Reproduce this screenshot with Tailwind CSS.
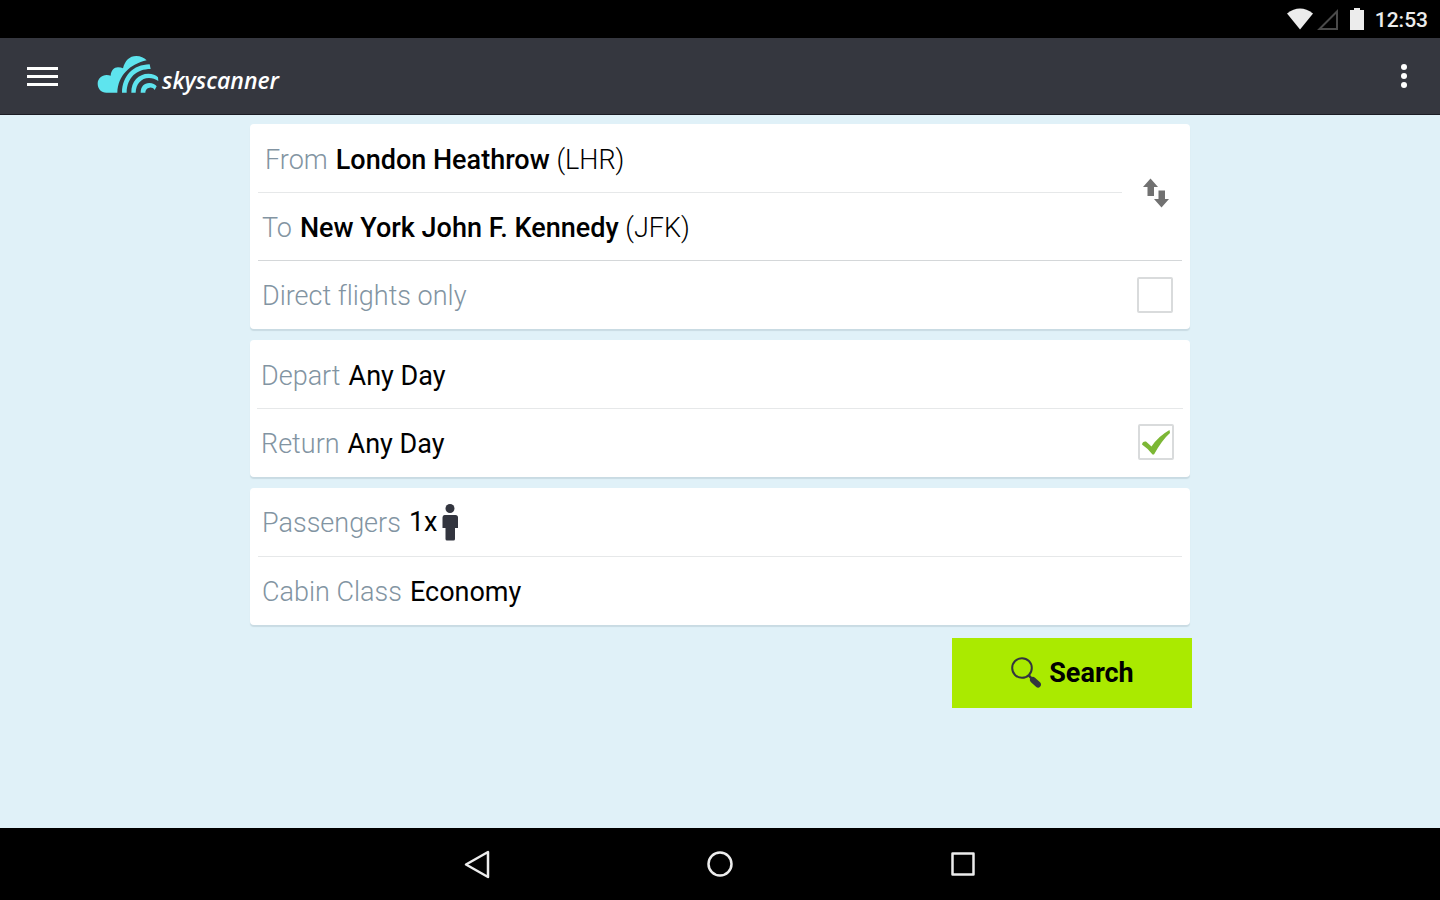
<!DOCTYPE html>
<html lang="en">
<head>
<meta charset="utf-8">
<meta name="viewport" content="width=device-width, initial-scale=1">
<title>Skyscanner</title>
<script src="https://cdn.jsdelivr.net/npm/@tailwindcss/browser@4"></script>
</head>
<body class="flex min-h-screen flex-col bg-[#e0f1f8] font-['Roboto',sans-serif] text-[27px] leading-8 text-black [font-variant-ligatures:none]">

<!-- System status bar -->
<div class="flex h-[38px] items-center justify-end bg-black pr-3 text-[#ececec]">
  <svg class="mr-1 h-[22px] w-[26px]" viewBox="0 0 26 22" fill="#ececec" aria-hidden="true"><path d="M0 5.500Q13-4.500 26 5.500L13 21.500Z"/></svg>
  <svg class="mr-3 h-[21px] w-[21px]" viewBox="0 0 21 21" fill="none" stroke="#4a4a4a" stroke-width="2" aria-hidden="true"><path d="M2.500 20H20V2.500Z"/></svg>
  <svg class="mr-[11px] h-[22px] w-[14px]" viewBox="0 0 14 22" fill="#ececec" aria-hidden="true"><path d="M4 0h6v2h4v20H0V2h4z"/></svg>
  <time class="pt-0.5 text-[21px] leading-6 font-medium">12:53</time>
</div>

<!-- App bar -->
<header class="flex h-[77px] items-center border-b border-[#1c1c24] bg-[#35373f] px-[27px]">
  <button type="button" aria-label="Menu" class="mr-[39px] flex w-[31px] flex-col gap-[5px]">
    <span class="h-[3px] bg-white"></span><span class="h-[3px] bg-white"></span><span class="h-[3px] bg-white"></span>
  </button>
  <a href="#" class="flex items-center" aria-label="skyscanner">
    <svg class="mb-1 h-10 w-[62px]" viewBox="289 54 186 120" fill="#5ee4ee" aria-hidden="true">
      <path d="M350 170H317C302 170 291 158 291 143C291 128 303 117 318 117C323 117 327 118 330 119C331 104 340 94 352 94C358 94 363 95 367 97C373 74 386 60 407 60C420 60 430 65 438 73C388 84 352 119 350 170Z"/>
      <path d="M364 170C365 120 397 86 447 85L450 99C408 99 379 124 378 170Z"/>
      <path d="M392 170C391 136 414 113 443 113C456 113 466 117 472 124L473 135C464 129 455 126 445 126C421 126 406 145 405 170Z"/>
      <path d="M420 170C420 152 430 141 446 141C456 141 464 145 468 151L462 162C458 156 452 154 447 155C438 156 434 162 434 170Z"/>
    </svg>
    <span class="ml-[3px] pt-2 font-['Open_Sans',sans-serif] text-[23px] leading-8 font-semibold text-white italic">skyscanner</span>
  </a>
  <button type="button" aria-label="More options" class="ml-auto flex w-[18px] flex-col items-center gap-[3px]">
    <span class="size-[6px] rounded-full bg-white"></span><span class="size-[6px] rounded-full bg-white"></span><span class="size-[6px] rounded-full bg-white"></span>
  </button>
</header>

<main class="w-full flex-1 px-2 pt-[9px]">
  <form class="mx-auto flex w-full max-w-[940px] flex-col gap-[11px]">

    <!-- Route -->
    <section class="rounded-[4px] bg-white px-2 shadow-[0_2px_1px_#c9dbe3]">
      <div class="flex border-b border-[#d4d7d9]">
        <div class="flex-1">
          <button type="button" class="flex h-[69px] w-full items-center gap-2 border-b border-[#e6e8e9] px-[7px] pt-1"><span class="font-light text-[#8294a2]">From</span><span><span class="font-medium">London Heathrow</span> <span class="font-light">(LHR)</span></span></button>
          <button type="button" class="flex h-[67px] w-full items-center gap-2 px-1 pt-0.5"><span class="font-light text-[#8294a2]">To</span><span><span class="font-medium">New York John F. Kennedy</span> <span class="font-light">(JFK)</span></span></button>
        </div>
        <button type="button" aria-label="Swap origin and destination" class="flex w-[60px] items-center justify-center pt-0.5 pl-2">
          <svg class="h-[30px] w-[28px]" viewBox="0 0 28 30" fill="#717171" aria-hidden="true"><path d="M8.500 0.500L16 9H12V18H5.500V9H1Z"/><path d="M16.500 12.500H23V21H27L19.500 29.500L12 21H16.500Z"/></svg>
        </button>
      </div>
      <label class="flex h-[68px] items-center justify-between pr-[9px] pl-1">
        <span class="pt-0.5 font-light text-[#8294a2]">Direct flights only</span>
        <input type="checkbox" class="size-9 appearance-none rounded-[2px] border-2 border-[#d9dbdc] bg-white">
      </label>
    </section>

    <!-- Dates -->
    <section class="rounded-[4px] bg-white px-[7px] shadow-[0_2px_1px_#c9dbe3]">
      <button type="button" class="flex h-[69px] w-full items-center gap-2 border-b border-[#e6e8e9] px-1 pt-1"><span class="font-light text-[#8294a2]">Depart</span><span>Any Day</span></button>
      <div class="flex h-[68px] items-center pr-[9px] pb-0.5 pl-1">
        <button type="button" class="flex flex-1 items-center gap-2 pt-1"><span class="font-light text-[#8294a2]">Return</span><span>Any Day</span></button>
        <span class="relative size-9">
          <input type="checkbox" checked aria-label="Return flight" class="peer block size-9 appearance-none rounded-[2px] border-2 border-[#d9dbdc] bg-white">
          <svg class="pointer-events-none absolute inset-0 hidden size-9 peer-checked:block" viewBox="0 0 36 36" fill="#7cb735" aria-hidden="true"><path d="M4 20.500Q4.500 17 8 17.500L13.500 22.500Q20 12.500 31.500 6L32 9Q24 16 16 30.500H14.500Q10 24.500 4 20.500Z"/></svg>
        </span>
      </div>
    </section>

    <!-- Travellers -->
    <section class="rounded-[4px] bg-white px-2 shadow-[0_2px_1px_#c9dbe3]">
      <button type="button" class="flex h-[69px] w-full items-center gap-2 border-b border-[#e6e8e9] px-1">
        <span class="pt-0.5 font-light text-[#8294a2]">Passengers</span>
        <span class="flex items-center gap-[5px]">1x
          <svg class="h-[37px] w-4" viewBox="0 0 16 37" fill="#33353f" aria-hidden="true"><circle cx="8" cy="4.500" r="4.500"/><path d="M2.500 11H13.500Q16 11 16 13.500V24H13V35Q13 36.500 11.500 36.500H5Q3.500 36.500 3.500 35V24H0.500V13.500Q0.500 11 2.500 11Z"/></svg>
        </span>
      </button>
      <button type="button" class="flex h-[68px] w-full items-center gap-2 px-1 pt-0.5"><span class="font-light text-[#8294a2]">Cabin Class</span><span>Economy</span></button>
    </section>

    <button type="submit" class="-mr-0.5 mt-[2px] flex h-[70px] w-[240px] items-center justify-center gap-2 self-end bg-[#aaea00] font-bold">
      <svg class="h-8 w-[31px]" viewBox="0 0 31 32" aria-hidden="true"><circle cx="12" cy="11" r="9.800" fill="none" stroke="#33353f" stroke-width="2"/><path d="M18.500 18L22 22" stroke="#33353f" stroke-width="2.500"/><path d="M23 23L28 27.500" stroke="#33353f" stroke-width="6" stroke-linecap="round"/></svg>
      Search
    </button>
  </form>
</main>

<!-- System navigation bar -->
<nav class="flex h-[72px] items-center justify-center gap-[213px] bg-black" aria-label="System">
  <button type="button" aria-label="Back" class="size-[30px]"><svg class="size-[30px]" viewBox="0 0 30 30" fill="none" stroke="#ececec" stroke-width="2.500" stroke-linejoin="round" aria-hidden="true"><path d="M26 3V28L4 15.500Z"/></svg></button>
  <button type="button" aria-label="Home" class="size-[30px]"><svg class="size-[30px]" viewBox="0 0 30 30" fill="none" stroke="#ececec" stroke-width="2.500" aria-hidden="true"><circle cx="15" cy="15" r="11.500"/></svg></button>
  <button type="button" aria-label="Recent apps" class="size-[30px]"><svg class="size-[30px]" viewBox="0 0 30 30" fill="none" stroke="#ececec" stroke-width="2.500" stroke-linejoin="round" aria-hidden="true"><path d="M4.500 4.500H25.500V25.500H4.500Z"/></svg></button>
</nav>
</body>
</html>
